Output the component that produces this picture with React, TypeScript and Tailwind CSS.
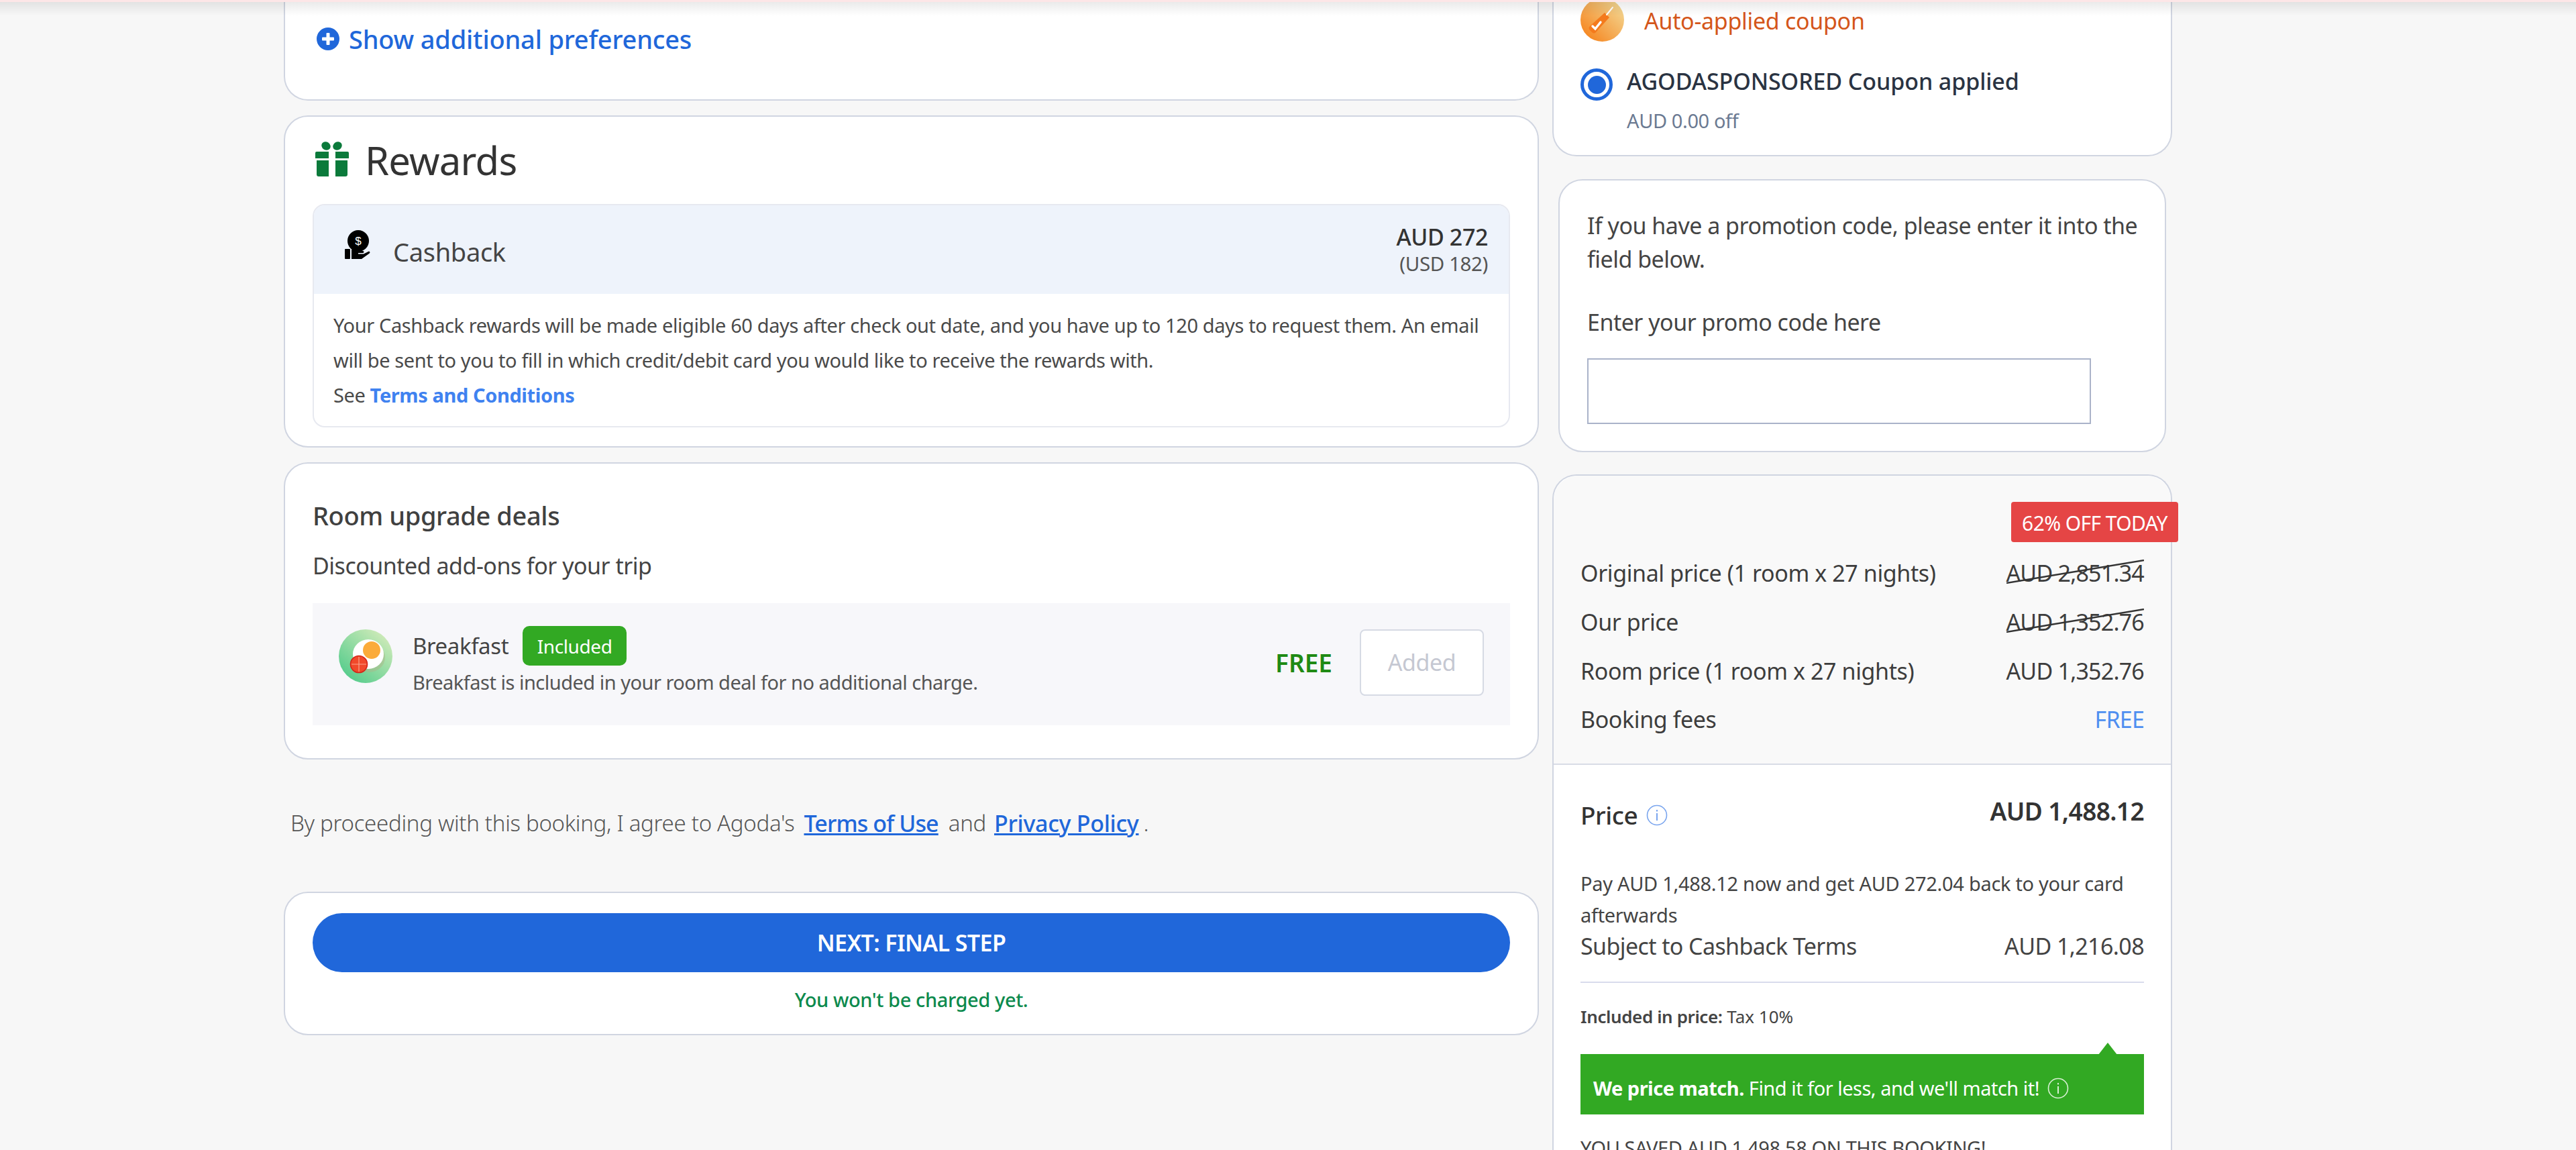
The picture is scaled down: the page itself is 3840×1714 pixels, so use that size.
import React from "react";

function Info({ color, size = 32 }: { color: string; size?: number }) {
  return (
    <svg width={size} height={size} viewBox="0 0 32 32" fill="none" className="shrink-0">
      <circle cx="16" cy="16" r="14.5" stroke={color} strokeWidth="1.6" />
      <rect x="15" y="13" width="2" height="11" fill={color} />
      <rect x="15" y="8" width="2" height="2.5" fill={color} />
    </svg>
  );
}

function PlusIcon() {
  return (
    <svg width="34" height="34" viewBox="0 0 34 34" className="shrink-0">
      <circle cx="17" cy="17" r="17" fill="#2067da" />
      <rect x="8" y="14.5" width="18" height="5" rx="1" fill="#fff" />
      <rect x="14.5" y="8" width="5" height="18" rx="1" fill="#fff" />
    </svg>
  );
}

function GiftIcon() {
  return (
    <svg width="52" height="52" viewBox="0 0 52 52" className="shrink-0">
      <g fill="#0b7a3b">
        <ellipse cx="17" cy="6.5" rx="7" ry="6" transform="rotate(35 17 6.5)" />
        <ellipse cx="34" cy="6.5" rx="7" ry="6" transform="rotate(-35 34 6.5)" />
        <path d="M1 17a2 2 0 0 1 2-2h18v10H1zM31 15h18a2 2 0 0 1 2 2v8H31z" />
        <path d="M3 28h18v24H6a3 3 0 0 1-3-3zM31 28h18v21a3 3 0 0 1-3 3H31z" />
      </g>
    </svg>
  );
}

function CashbackIcon() {
  return (
    <svg width="40" height="44" viewBox="0 0 40 44" className="shrink-0">
      <circle cx="21" cy="16" r="16" fill="#000" />
      <text x="21" y="22" textAnchor="middle" fontSize="17" fontFamily="Liberation Sans, sans-serif" fill="#fff">$</text>
      <rect x="1" y="28" width="8" height="15" rx="1" fill="#000" />
      <path d="M11 29h6c3 0 4 1 5 2h6c2 0 2 3 0 3h-7v1.5h8l7-3.5c2-.8 3.5 1.5 1.5 2.8L26 43H11z" fill="#000" />
    </svg>
  );
}

function BreakfastIcon() {
  return (
    <svg width="80" height="80" viewBox="0 0 80 80" className="shrink-0">
      <defs>
        <linearGradient id="bf" x1="0.15" y1="0.9" x2="0.85" y2="0.1">
          <stop offset="0" stopColor="#56cc8c" />
          <stop offset="1" stopColor="#cdeab8" />
        </linearGradient>
      </defs>
      <circle cx="40" cy="40" r="40" fill="url(#bf)" />
      <ellipse cx="45" cy="42" rx="24" ry="22" fill="#a9b98a" opacity="0.55" />
      <ellipse cx="44" cy="37" rx="23" ry="22" fill="#fff" />
      <circle cx="49" cy="31" r="13" fill="#fbab3a" />
      <circle cx="30" cy="52" r="12.5" fill="#f1492a" stroke="#d3261a" strokeWidth="1.6" />
      <path d="M30 41v22M19 52h22" stroke="#f9a58c" strokeWidth="1.2" />
    </svg>
  );
}

function CouponIcon() {
  return (
    <svg width="65" height="65" viewBox="0 0 65 65" className="shrink-0">
      <defs>
        <linearGradient id="cp" x1="0.1" y1="0.9" x2="0.9" y2="0.1">
          <stop offset="0" stopColor="#f6851f" />
          <stop offset="1" stopColor="#f3d894" />
        </linearGradient>
      </defs>
      <circle cx="32.5" cy="32.5" r="32.5" fill="url(#cp)" />
      <path d="M36 22l7 7-20 22c-2 2-4 2-6 0l-3-3c-2-2-2-4 0-6z" fill="#f47a1c" />
      <path d="M39 25l9-11" stroke="#fff" strokeWidth="2" strokeLinecap="round" />
      <path d="M18 42l4 4 8-10" stroke="#fff" strokeWidth="3.4" fill="none" strokeLinecap="round" />
    </svg>
  );
}

function PriceRow({ label, value, struck, blue }: { label: string; value: string; struck?: boolean; blue?: boolean }) {
  return (
    <div className="flex h-[73px] items-center justify-between text-[34px] text-[#3d3d3d]">
      <span className="tracking-[-0.4px]">{label}</span>
      <span className={blue ? "relative tracking-[-0.8px] text-[#4f8ff0]" : "relative tracking-[-0.8px]"}>
        {value}
        {struck && (
          <svg width="205" height="36" viewBox="0 0 205 36" className="absolute right-0 top-[5px]">
            <line x1="0" y1="35" x2="205" y2="1" stroke="#333" strokeWidth="2.4" />
          </svg>
        )}
      </span>
    </div>
  );
}

export default function App() {
  return (
    <div className="relative h-[1714px] w-[3840px] overflow-hidden bg-[#f7f7f7] font-['Noto_Sans',sans-serif] text-[#3d3d3d]">
      <div className="absolute inset-x-0 top-0 z-10 h-[24px] bg-gradient-to-b from-[#00000018] to-transparent">
        <div className="h-[3px] bg-[#fde6e7]" />
      </div>

      <div className="flex pl-[423px] gap-[20px]">
        {/* Left column */}
        <div className="flex w-[1871px] flex-col">
          <div className="h-[150px] rounded-b-[36px] border-2 border-t-0 border-[#d0d5e1] bg-white pl-[47px] pt-[34px]">
            <div className="flex h-[48px] items-center gap-[14px]">
              <PlusIcon />
              <span className="text-[38px] font-medium tracking-[-0.2px] text-[#2067da]">Show additional preferences</span>
            </div>
          </div>

          <div className="mt-[22px] h-[495px] rounded-[36px] border-2 border-[#d0d5e1] bg-white px-[41px]">
            <div className="flex h-[126px] items-center gap-[23px] pl-[3px]">
              <GiftIcon />
              <span className="mt-[3px] text-[58px] tracking-[-0.8px] text-[#333]">Rewards</span>
            </div>
            <div className="mt-[4px] h-[333px] overflow-hidden rounded-[18px] border-2 border-[#e7e9f0]">
              <div className="flex h-[132px] items-center justify-between bg-[#eef3fb] pl-[45px] pr-[31px]">
                <div className="flex items-start gap-[33px]">
                  <div className="-mt-[2px]"><CashbackIcon /></div>
                  <span className="mt-[6px] text-[38px] leading-[48px] tracking-[-0.3px] text-[#444]">Cashback</span>
                </div>
                <div className="flex flex-col items-end">
                  <span className="text-[34px] font-medium leading-[42px] tracking-[-0.4px] text-[#333]">AUD 272</span>
                  <span className="text-[29.5px] leading-[38px] tracking-[-0.4px] text-[#555]">(USD 182)</span>
                </div>
              </div>
              <p className="pl-[29px] pt-[21px] text-[29px] leading-[52px] tracking-[-0.4px] text-[#4a4a4a]">
                Your Cashback rewards will be made eligible 60 days after check out date, and you have up to 120 days to request them. An email
                <br />
                will be sent to you to fill in which credit/debit card you would like to receive the rewards with.
                <br />
                See <span className="font-bold text-[#3f82f0]">Terms and Conditions</span>
              </p>
            </div>
          </div>

          <div className="mt-[22px] h-[443px] rounded-[36px] border-2 border-[#d0d5e1] bg-white px-[41px] pt-[53px]">
            <div className="text-[38px] font-medium leading-[48px] tracking-[-0.4px] text-[#404040]">Room upgrade deals</div>
            <div className="mt-[27px] text-[34px] leading-[48px] tracking-[-0.5px] text-[#444]">Discounted add-ons for your trip</div>
            <div className="mt-[32px] flex h-[182px] items-start bg-[#f7f7fa] px-[39px] pt-[39px]">
              <BreakfastIcon />
              <div className="-mt-[5px] ml-[30px]">
                <div className="flex h-[59px] items-center gap-[21px]">
                  <span className="text-[33px] tracking-[-0.4px] text-[#444]">Breakfast</span>
                  <span className="flex h-[59px] w-[155px] items-center justify-center rounded-[10px] bg-[#32a923] text-[28px] tracking-[-0.4px] text-white">Included</span>
                </div>
                <div className="mt-[3px] text-[29px] leading-[44px] tracking-[-0.5px] text-[#555]">Breakfast is included in your room deal for no additional charge.</div>
              </div>
              <div className="ml-auto flex items-center gap-[41px]">
                <span className="text-[37px] font-semibold text-[#1f8a14]">FREE</span>
                <span className="flex h-[99px] w-[185px] items-center justify-center rounded-[8px] border-2 border-[#d6dae4] bg-white text-[34px] tracking-[-0.4px] text-[#c5c8d2]">Added</span>
              </div>
            </div>
          </div>

          <div className="mt-[71px] flex h-[48px] items-center pl-[10px] text-[33px] font-light tracking-[-0.3px] text-[#555]">
            <span>By proceeding with this booking, I agree to Agoda's</span>
            <span className="ml-[14px] text-[34px] font-medium tracking-[-0.9px] text-[#2067da] underline">Terms of Use</span>
            <span className="ml-[15px]">and</span>
            <span className="ml-[12px] text-[34px] font-medium tracking-[-0.3px] text-[#2067da] underline">Privacy Policy</span>
            <span className="ml-[7px]">.</span>
          </div>

          <div className="mt-[78px] h-[214px] rounded-[36px] border-2 border-[#d0d5e1] bg-white px-[41px] pt-[30px]">
            <div className="flex h-[88px] items-center justify-center rounded-full bg-[#2067da] text-[34px] font-semibold tracking-[-0.6px] text-white">NEXT: FINAL STEP</div>
            <div className="mt-[19px] text-center text-[29px] font-medium leading-[44px] tracking-[-0.4px] text-[#0c8a4d]">You won't be charged yet.</div>
          </div>
        </div>

        {/* Right column */}
        <div className="flex w-[924px] flex-col">
          <div className="h-[233px] rounded-b-[36px] border-2 border-t-0 border-[#d0d5e1] bg-white pl-[40px]">
            <div className="-mt-[3px] flex h-[65px] items-center gap-[30px]">
              <CouponIcon />
              <span className="mt-[4px] text-[34px] tracking-[-0.3px] text-[#d4561a]">Auto-applied coupon</span>
            </div>
            <div className="mt-[37px] flex items-start gap-[21px]">
              <div className="mt-[3px] flex h-[48px] w-[48px] items-center justify-center rounded-full border-[5px] border-[#2067da] bg-white">
                <div className="h-[27px] w-[27px] rounded-full bg-[#2067da]" />
              </div>
              <div>
                <div className="text-[34px] font-medium leading-[44px] tracking-[-0.1px] text-[#2a3342]">AGODASPONSORED Coupon applied</div>
                <div className="mt-[15px] text-[29px] leading-[44px] tracking-[-0.4px] text-[#6b7a92]">AUD 0.00 off</div>
              </div>
            </div>
          </div>

          <div className="mx-[9px] mt-[34px] h-[407px] rounded-[36px] border-2 border-[#d0d5e1] bg-white px-[41px] pt-[42px] text-[34px] tracking-[-0.5px] text-[#444]">
            <div className="whitespace-nowrap leading-[50px]">
              If you have a promotion code, please enter it into the
              <br />
              field below.
            </div>
            <div className="mt-[44px] leading-[50px]">Enter your promo code here</div>
            <div className="mt-[29px] h-[98px] w-[751px] border-2 border-[#aab3c9] bg-white" />
          </div>

          <div className="relative mt-[33px] h-[1100px] rounded-t-[36px] border-2 border-b-0 border-[#d0d5e1] bg-white">
            <div className="absolute right-[-11px] top-[39px] flex h-[60px] w-[249px] items-center justify-center rounded-[4px] bg-[#e54545] pt-[2px] text-[30px] tracking-[-0.6px] text-white">62% OFF TODAY</div>
            <div className="h-[431px] rounded-t-[36px] border-b-2 border-[#d8dce6] bg-[#f9f9f9] px-[40px] pt-[109px]">
              <PriceRow label="Original price (1 room x 27 nights)" value="AUD 2,851.34" struck />
              <PriceRow label="Our price" value="AUD 1,352.76" struck />
              <PriceRow label="Room price (1 room x 27 nights)" value="AUD 1,352.76" />
              <div className="-mt-[1px]"><PriceRow label="Booking fees" value="FREE" blue /></div>
            </div>
            <div className="px-[40px] pt-[39px]">
              <div className="flex h-[60px] items-start justify-between">
                <div className="mt-[8px] flex items-center gap-[13px]">
                  <span className="text-[37px] font-medium tracking-[-0.5px] text-[#333]">Price</span>
                  <Info color="#7aa5ee" />
                </div>
                <span className="text-[37px] font-semibold leading-[60px] tracking-[-0.6px] text-[#333]">AUD 1,488.12</span>
              </div>
              <div className="mt-[54px] text-[29px] leading-[47px] tracking-[-0.3px] text-[#444]">
                Pay AUD 1,488.12 now and get AUD 272.04 back to your card
                <br />
                afterwards
              </div>
              <div className="flex h-[46px] items-center justify-between text-[34px] tracking-[-0.6px] text-[#444]">
                <span>Subject to Cashback Terms</span>
                <span>AUD 1,216.08</span>
              </div>
              <div className="mt-[30px] h-[2px] bg-[#d8dcec]" />
              <div className="mt-[28px] text-[26px] leading-[44px] text-[#444]">
                <span className="font-semibold tracking-[-0.4px]">Included in price:</span> Tax 10%
              </div>
              <div className="relative mt-[34px] flex h-[90px] items-center gap-[12px] bg-[#32a923] pl-[19px] pt-[12px] text-[29px] tracking-[-0.5px] text-white">
                <div className="absolute right-[40px] top-[-17px] h-0 w-0 border-x-[14px] border-b-[18px] border-x-transparent border-b-[#32a923]" />
                <span>
                  <span className="font-bold">We price match.</span> Find it for less, and we'll match it!
                </span>
                <Info color="#d9f0d4" />
              </div>
              <div className="mt-[28px] text-[29px] leading-[44px] tracking-[-0.4px] text-[#444]">YOU SAVED AUD 1,498.58 ON THIS BOOKING!</div>
            </div>
          </div>
        </div>
      </div>
    </div>
  );
}
